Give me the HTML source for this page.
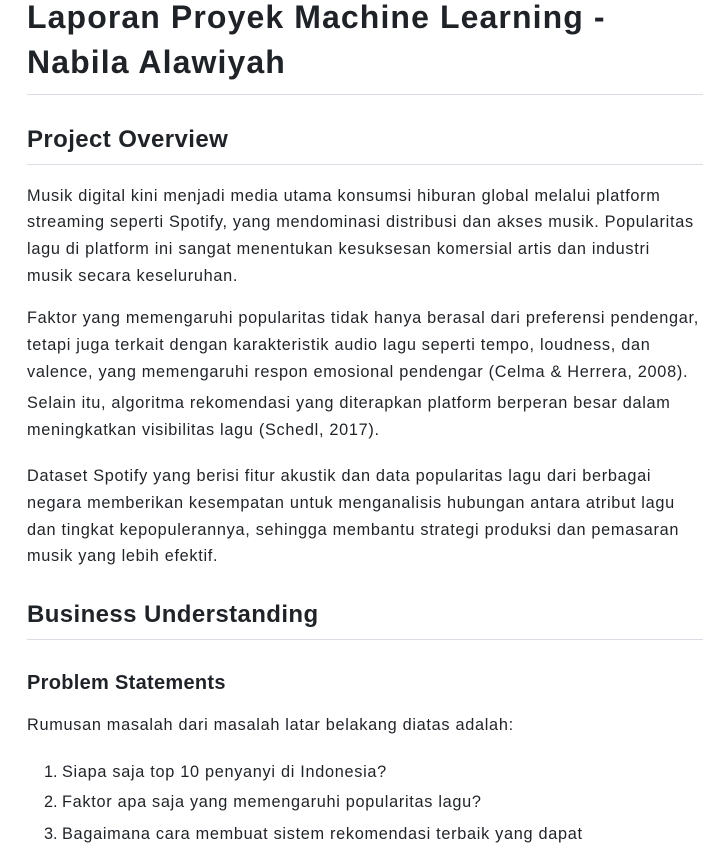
<!DOCTYPE html>
<html><head><meta charset="utf-8"><style>
html,body{margin:0;padding:0;background:#fff;width:717px;height:851px;overflow:hidden}
body{font-family:"Liberation Sans",sans-serif;color:#1f2328;position:relative}
.l{position:absolute;left:27px;white-space:nowrap}
.h1{font-size:32px;font-weight:600;line-height:40px;letter-spacing:1.1px}
.h2{font-size:24px;font-weight:600;line-height:30px;letter-spacing:0.4px}
.h3{font-size:20px;font-weight:600;line-height:26px;letter-spacing:0.3px}
.p{font-size:16.3px;line-height:24px;letter-spacing:0.7px}
.hr{position:absolute;left:27px;width:676px;height:1px;background:#d8dee4}
.n{position:absolute;left:44px;font-size:16.3px;line-height:24px}
.li{position:absolute;left:62px;font-size:16.3px;line-height:24px;white-space:nowrap;letter-spacing:0.7px}
</style></head><body>
<div class="l h1" style="top:-3px">Laporan Proyek Machine Learning -</div>
<div class="l h1" style="top:42px">Nabila Alawiyah</div>
<div class="hr" style="top:94px"></div>
<div class="l h2" style="top:125px">Project Overview</div>
<div class="hr" style="top:164px"></div>
<div class="l p" style="top:184px">Musik digital kini menjadi media utama konsumsi hiburan global melalui platform</div>
<div class="l p" style="top:210px">streaming seperti Spotify, yang mendominasi distribusi dan akses musik. Popularitas</div>
<div class="l p" style="top:237px">lagu di platform ini sangat menentukan kesuksesan komersial artis dan industri</div>
<div class="l p" style="top:264px">musik secara keseluruhan.</div>
<div class="l p" style="top:306px">Faktor yang memengaruhi popularitas tidak hanya berasal dari preferensi pendengar,</div>
<div class="l p" style="top:333px">tetapi juga terkait dengan karakteristik audio lagu seperti tempo, loudness, dan</div>
<div class="l p" style="top:360px">valence, yang memengaruhi respon emosional pendengar (Celma &amp; Herrera, 2008).</div>
<div class="l p" style="top:391px">Selain itu, algoritma rekomendasi yang diterapkan platform berperan besar dalam</div>
<div class="l p" style="top:418px">meningkatkan visibilitas lagu (Schedl, 2017).</div>
<div class="l p" style="top:464px">Dataset Spotify yang berisi fitur akustik dan data popularitas lagu dari berbagai</div>
<div class="l p" style="top:491px">negara memberikan kesempatan untuk menganalisis hubungan antara atribut lagu</div>
<div class="l p" style="top:518px">dan tingkat kepopulerannya, sehingga membantu strategi produksi dan pemasaran</div>
<div class="l p" style="top:544px">musik yang lebih efektif.</div>
<div class="l h2" style="top:600px">Business Understanding</div>
<div class="hr" style="top:639px"></div>
<div class="l h3" style="top:670px">Problem Statements</div>
<div class="l p" style="top:713px">Rumusan masalah dari masalah latar belakang diatas adalah:</div>
<div class="n" style="top:760px">1.</div><div class="li" style="top:760px">Siapa saja top 10 penyanyi di Indonesia?</div>
<div class="n" style="top:790px">2.</div><div class="li" style="top:790px">Faktor apa saja yang memengaruhi popularitas lagu?</div>
<div class="n" style="top:822px">3.</div><div class="li" style="top:822px">Bagaimana cara membuat sistem rekomendasi terbaik yang dapat</div>
</body></html>
